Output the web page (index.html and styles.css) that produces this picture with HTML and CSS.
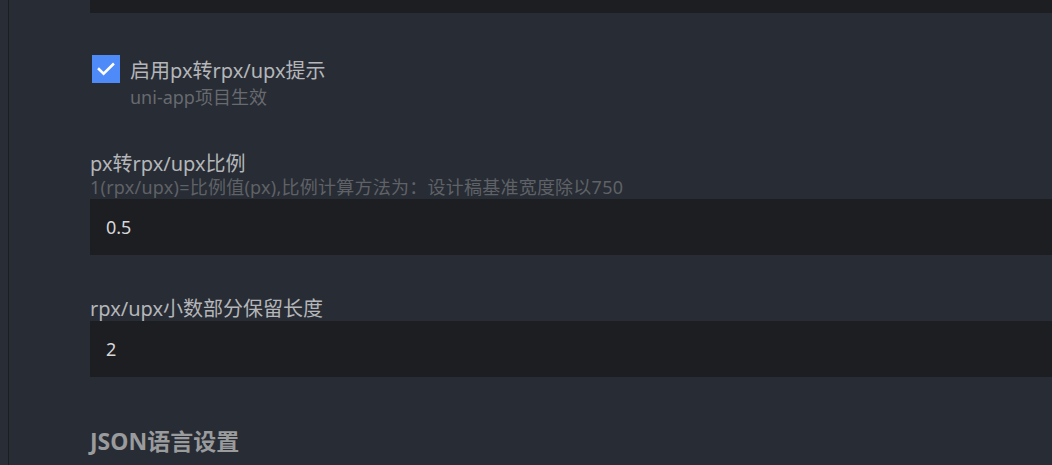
FILE: index.html
```html
<!DOCTYPE html>
<html lang="zh-CN">
<head>
  <meta charset="UTF-8">
  <title>设置</title>
  <link rel="stylesheet" href="styles.css">
</head>
<body>
  <div class="rail"></div>
  <div class="settings">
    <div class="field field-top"></div>

    <div class="option">
      <label class="check-row">
        <span class="checkbox">
          <svg width="18" height="14" viewBox="0 0 18 14"><path d="M2 7.2 L6.6 11.6 L16 2.4" fill="none" stroke="#fff" stroke-width="2.6" stroke-linecap="square"/></svg>
        </span>
        <span class="check-label">启用px转rpx/upx提示</span>
      </label>
      <div class="check-hint">uni-app项目生效</div>
    </div>

    <div class="setting setting-ratio">
      <div class="setting-title">px转rpx/upx比例</div>
      <div class="setting-desc">1(rpx/upx)=比例值(px),比例计算方法为：设计稿基准宽度除以750</div>
      <div class="field">0.5</div>
    </div>

    <div class="setting setting-digits">
      <div class="setting-title">rpx/upx小数部分保留长度</div>
      <div class="field">2</div>
    </div>

    <h3 class="section">JSON语言设置</h3>
  </div>
</body>
</html>
```

FILE: styles.css
```css
body {
  margin: 0;
  height: 465px;
  overflow: hidden;
  display: flex;
  background: #282c34;
  font-family: 'Noto Sans', 'Noto Sans CJK SC', sans-serif;
  color: #b4b6ba;
}
.rail {
  width: 8px;
  flex-shrink: 0;
  border-right: 1px solid #1b1d21;
  background: #292d35;
}
.settings {
  flex: 1;
  padding-left: 81px;
  display: flex;
  flex-direction: column;
}
.field {
  height: 56px;
  background: #1d1e22;
  color: #d6d7d9;
  font-size: 18px;
  line-height: 56px;
  padding-left: 16px;
}
.field-top {
  height: 13px;
}
.option {
  margin-top: 42px;
}
.check-row {
  display: flex;
  align-items: center;
  height: 28px;
}
.checkbox {
  width: 28px;
  height: 28px;
  background: #4e8af8;
  display: flex;
  align-items: center;
  justify-content: center;
  margin-left: 2px;
}
.check-label {
  margin-left: 10px;
  font-size: 20px;
  color: #b4b6ba;
}
.check-hint {
  margin-left: 40px;
  margin-top: 3px;
  font-size: 18px;
  line-height: 22px;
  color: #676a6f;
}
.setting-ratio {
  margin-top: 43px;
}
.setting-digits {
  margin-top: 41px;
}
.setting-title {
  font-size: 20px;
  line-height: 25px;
  color: #b4b6ba;
}
.setting-desc {
  font-size: 18px;
  line-height: 23px;
  letter-spacing: 0.24px;
  color: #5f6267;
}
.section {
  margin: 50px 0 0;
  font-size: 23px;
  line-height: 28px;
  font-weight: bold;
  color: #9a9b9d;
}
```
